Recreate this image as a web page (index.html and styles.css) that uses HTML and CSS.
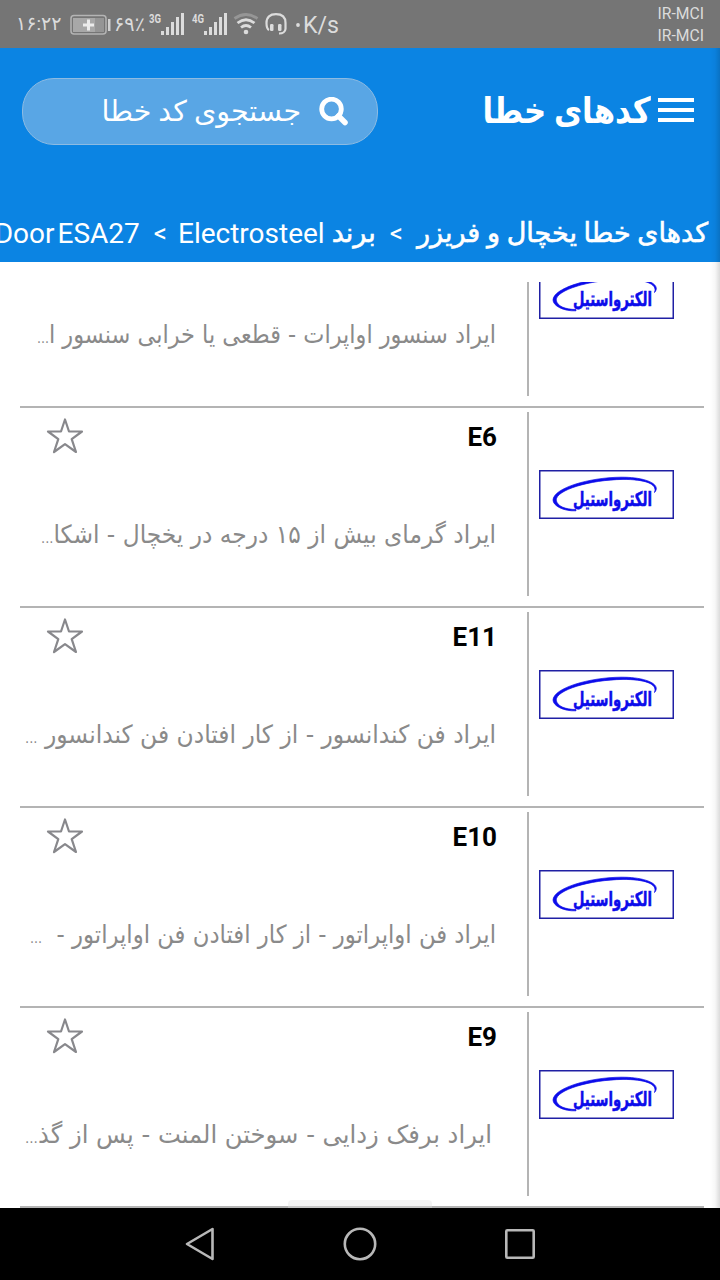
FILE: index.html
```
<!DOCTYPE html>
<html lang="fa" dir="rtl">
<head>
  <meta charset="UTF-8" />
  <meta name="viewport" content="width=device-width, initial-scale=1.0"/>
  <title>کدهای خطا</title>
  <link rel="stylesheet" href="styles.css">
</head>
<body>

  <!-- Shared icons -->
  <svg class="defs" width="0" height="0">
    <symbol id="star" viewBox="0 0 38 38">
      <path d="M19 3.500L23 15.500H36L25.700 23.200L30 36L19 28.200L8 36L12.300 23.200L2 15.500H15Z" fill="none" stroke="#88888c" stroke-width="2.200" stroke-linejoin="round"/>
    </symbol>
    <symbol id="brand" viewBox="0 0 135 49">
      <rect x="0.75" y="0.75" width="133.5" height="47.5" fill="#fff" stroke="#2020a4" stroke-width="1.5"/>
      <path d="M37 40.800C25 41.500 14 36 14 30C14.500 18 50 7.500 82 7.200C106 7 123 14 115.500 22.500C119 13.500 105 9.400 84 9.400C50 10 17.500 20 17.200 30C18 36 26 39.500 37 39.500Z" fill="#0c0cea" stroke="#0c0cea" stroke-width="0.7"/>
      <text class="brand-text" x="113" y="36" textLength="79" lengthAdjust="spacingAndGlyphs">الکترواستیل</text>
    </symbol>
  </svg>

  <!-- Status bar -->
  <div class="status" dir="ltr">
    <span class="clock">۱۶:۲۲</span>
    <svg class="status-icons" width="280" height="48" viewBox="0 0 280 48">
      <rect x="1" y="15.500" width="35" height="18.500" rx="3" fill="none" stroke="#b4b4b4" stroke-width="1.500"/>
      <rect x="3" y="18" width="22" height="14" fill="#a8a8a8"/>
      <rect x="25" y="18" width="9" height="14" fill="#959595"/>
      <path d="M18.500 19.500V30.500M13 25H24" stroke="#ececec" stroke-width="3"/>
      <rect x="38" y="19" width="2.500" height="12" fill="#d0d0d0"/>
      <text class="st-num" x="44" y="31" textLength="31" lengthAdjust="spacingAndGlyphs">۶۹٪</text>
      <text class="st-net" x="79" y="23" textLength="12" lengthAdjust="spacingAndGlyphs">3G</text>
      <g fill="#dcdcdc">
        <rect x="91" y="31" width="3" height="4"/><rect x="96" y="27" width="3" height="8"/><rect x="101" y="22" width="3" height="13"/><rect x="106" y="17" width="3" height="18"/><rect x="111" y="13" width="3" height="22"/>
        <rect x="134" y="31" width="3" height="4"/><rect x="139" y="27" width="3" height="8"/><rect x="144" y="22" width="3" height="13"/><rect x="149" y="17" width="3" height="18"/><rect x="154" y="13" width="3" height="22"/>
      </g>
      <text class="st-net" x="122" y="23" textLength="12" lengthAdjust="spacingAndGlyphs">4G</text>
      <g fill="none" stroke-width="2.800">
        <path d="M164.500 18.500Q176 10.500 187.500 18.500" stroke="#969696"/>
        <path d="M167.500 23Q176 16.500 184.500 23M171 27.500Q176 23.500 181 27.500" stroke="#dcdcdc"/>
      </g>
      <circle cx="176" cy="32" r="2.300" fill="#dcdcdc"/>
      <path d="M199 30Q196.500 29 196.500 23C196.500 17 200 14.200 206 14.200S215.500 17 215.500 23V29Q215 33.500 209 33.500" fill="none" stroke="#dcdcdc" stroke-width="2.200"/>
      <rect x="200" y="24" width="3.500" height="7" rx="1.300" fill="#dcdcdc"/>
      <rect x="208" y="24" width="3.500" height="7" rx="1.300" fill="#dcdcdc"/>
      <circle cx="228" cy="25" r="1.900" fill="#dcdcdc"/>
      <text class="st-speed" x="233" y="33" textLength="36" lengthAdjust="spacingAndGlyphs">K/s</text>
    </svg>
    <div class="carriers">
      <span>IR-MCI</span>
      <span>IR-MCI</span>
    </div>
  </div>

  <!-- App area -->
  <div class="app">
    <header>
      <div class="toolbar">
        <div class="hamburger">
          <div></div>
          <div></div>
          <div></div>
        </div>
        <h1>کدهای خطا</h1>
        <div class="search">
          <svg width="30" height="30" viewBox="0 0 30 30">
            <circle cx="12.500" cy="12" r="9.800" fill="none" stroke="#fff" stroke-width="4.800"/>
            <path d="M19.500 19L26 25.500" stroke="#fff" stroke-width="5.500" stroke-linecap="round"/>
          </svg>
          <span>جستجوی کد خطا</span>
        </div>
      </div>
      <nav class="crumbs">
        <span class="crumb">کدهای خطا یخچال و فریزر</span>
        <span class="sep" dir="ltr">&lt;</span>
        <span class="crumb brand-name">برند</span>
        <span class="latin" dir="ltr">Electrosteel</span>
        <span class="sep" dir="ltr">&lt;</span>
        <span class="latin" dir="ltr">Door ESA27</span>
      </nav>
    </header>

    <main class="list">
      <div class="row">
        <div class="thumb"><svg width="135" height="49"><use href="#brand"/></svg></div>
        <div class="info">
          <div class="head"></div>
          <svg class="desc" width="480" height="44"><text x="479" y="31" textLength="459" lengthAdjust="spacingAndGlyphs">ایراد سنسور اواپرات - قطعی یا خرابی سنسور ا<tspan class="dots">...</tspan></text></svg>
        </div>
      </div>
      <div class="row">
        <div class="thumb"><svg width="135" height="49"><use href="#brand"/></svg></div>
        <div class="info">
          <div class="head"><strong>E6</strong><svg width="38" height="38"><use href="#star"/></svg></div>
          <svg class="desc" width="480" height="44"><text x="479" y="31" textLength="455" lengthAdjust="spacingAndGlyphs">ایراد گرمای بیش از ۱۵ درجه در یخچال - اشکا<tspan class="dots">...</tspan></text></svg>
        </div>
      </div>
      <div class="row">
        <div class="thumb"><svg width="135" height="49"><use href="#brand"/></svg></div>
        <div class="info">
          <div class="head"><strong>E11</strong><svg width="38" height="38"><use href="#star"/></svg></div>
          <svg class="desc" width="480" height="44"><text x="479" y="31" textLength="471" lengthAdjust="spacingAndGlyphs">ایراد فن کندانسور - از کار افتادن فن کندانسور <tspan class="dots">...</tspan></text></svg>
        </div>
      </div>
      <div class="row">
        <div class="thumb"><svg width="135" height="49"><use href="#brand"/></svg></div>
        <div class="info">
          <div class="head"><strong>E10</strong><svg width="38" height="38"><use href="#star"/></svg></div>
          <svg class="desc" width="480" height="44"><text x="479" y="31" textLength="466" lengthAdjust="spacingAndGlyphs">ایراد فن اواپراتور - از کار افتادن فن اواپراتور - &nbsp;<tspan class="dots">...</tspan></text></svg>
        </div>
      </div>
      <div class="row">
        <div class="thumb"><svg width="135" height="49"><use href="#brand"/></svg></div>
        <div class="info">
          <div class="head"><strong>E9</strong><svg width="38" height="38"><use href="#star"/></svg></div>
          <svg class="desc" width="480" height="44"><text x="475" y="31" textLength="467" lengthAdjust="spacingAndGlyphs">ایراد برفک زدایی - سوختن المنت - پس از گذ<tspan class="dots">...</tspan></text></svg>
        </div>
      </div>
    </main>

    <div class="handle"></div>
    <div class="edge"></div>
  </div>

  <!-- Navigation bar -->
  <footer dir="ltr">
    <svg width="32" height="36" viewBox="0 0 32 36"><path d="M28.500 3V33L3 18Z" fill="none" stroke="#b8b8b8" stroke-width="2.600" stroke-linejoin="round"/></svg>
    <svg width="36" height="36" viewBox="0 0 36 36"><circle cx="18" cy="18" r="15.200" fill="none" stroke="#b8b8b8" stroke-width="2.600"/></svg>
    <svg width="32" height="36" viewBox="0 0 32 36"><rect x="2.300" y="4.300" width="27.400" height="27.400" rx="1" fill="none" stroke="#b8b8b8" stroke-width="2.600"/></svg>
  </footer>

</body>
</html>
```
FILE: styles.css
```
* {
  box-sizing: border-box;
}

html, body {
  margin: 0;
  padding: 0;
  height: 100%;
  overflow: hidden;
  font-family: Roboto, 'DejaVu Sans', sans-serif;
  background: #fff;
}

body {
  width: 720px;
  height: 1280px;
  display: flex;
  flex-direction: column;
}

svg {
  display: block;
  flex-shrink: 0;
}

.defs {
  position: absolute;
}

/* Status bar */
.status {
  height: 48px;
  background: #757575;
  color: #dcdcdc;
  display: flex;
  align-items: center;
  padding: 0 16px;
}

.clock {
  width: 54px;
  font-size: 19px;
  line-height: 46px;
  white-space: nowrap;
}

.st-num, .st-net, .st-speed {
  fill: #dcdcdc;
  font-size: 20px;
}

.st-net {
  font-size: 13px;
  font-weight: 700;
}

.st-speed {
  font-size: 24px;
}

.carriers {
  margin-left: auto;
  display: flex;
  flex-direction: column;
  font-size: 15.7px;
  line-height: 22px;
  padding-top: 2px;
}

/* App area */
.app {
  position: relative;
  height: 1160px;
  display: flex;
  flex-direction: column;
  overflow: hidden;
}

header {
  height: 214px;
  background: #0b84e3;
  color: #fff;
}

.toolbar {
  display: flex;
  padding: 30px 26px 0 22px;
  height: 157px;
}

.hamburger {
  width: 36px;
  height: 24px;
  margin-top: 20px;
  display: flex;
  flex-direction: column;
  justify-content: space-between;
}

.hamburger div {
  height: 4px;
  background: #fff;
}

h1 {
  margin: 0 7px 0 0;
  font-size: 36px;
  line-height: 67px;
  white-space: nowrap;
  transform: scaleX(0.855);
  transform-origin: right center;
}

.search {
  margin-right: auto;
  width: 356px;
  height: 67px;
  display: flex;
  align-items: center;
  padding-right: 28px;
  border: 1px solid #8dbbe2;
  border-radius: 32px;
  background: #59a6e5;
  font-size: 28.5px;
  line-height: 60px;
  white-space: nowrap;
}

.search span {
  margin-right: 18px;
}

.crumbs {
  display: flex;
  align-items: center;
  height: 57px;
  padding-right: 12px;
  font-size: 27px;
  line-height: 57px;
  white-space: nowrap;
}

.crumb {
  -webkit-text-stroke: 0.6px #fff;
}

.latin {
  font-size: 28px;
  word-spacing: -4px;
}

.sep {
  font-size: 26px;
  margin: 0 14px;
}

.brand-name {
  margin-left: 7px;
}

.latin + .sep {
  margin: 0 11px 0 14px;
}

/* Error code list */
.list {
  margin: 20px 16px 0 20px;
  height: 926px;
  overflow: hidden;
  display: flex;
  flex-direction: column;
  justify-content: flex-end;
}

.row {
  height: 200px;
  flex-shrink: 0;
  display: flex;
  padding: 4px 0 10px;
  border-bottom: 2px solid #b4b4b4;
}

.thumb {
  width: 177px;
  border-left: 2px solid #b4b4b4;
  padding: 58px 30px 0 0;
}

.info {
  width: 507px;
  padding-right: 30px;
}

.head {
  height: 100px;
  display: flex;
  justify-content: space-between;
  padding: 4px 0 0 26px;
}

.head strong {
  font-size: 26px;
  line-height: 42px;
  color: #000;
}

.desc {
  overflow: visible;
}

.desc text {
  font-family: 'DejaVu Sans', sans-serif;
  font-size: 25px;
  fill: #8a8a8a;
}

.desc .dots {
  font-size: 14px;
  font-weight: 400;
}

.brand-text {
  font-family: 'DejaVu Sans', sans-serif;
  font-size: 20px;
  font-weight: 700;
  fill: #0c0cea;
  stroke: #0c0cea;
  stroke-width: 0.5px;
}

/* Pull-up handle and the drawer shadow overlap the list */
.handle {
  position: absolute;
  bottom: 0;
  left: 288px;
  width: 144px;
  height: 8px;
  border-radius: 4px 4px 0 0;
  background: rgba(225, 225, 225, 0.4);
}

.edge {
  position: absolute;
  top: 0;
  right: 0;
  width: 10px;
  height: 100%;
  background: linear-gradient(to right, rgba(0, 0, 0, 0), rgba(0, 0, 0, 0.03) 50%, rgba(0, 0, 0, 0.14));
}

/* Navigation bar */
footer {
  height: 72px;
  background: #000;
  display: flex;
  align-items: center;
  justify-content: center;
  gap: 126px;
}
```
